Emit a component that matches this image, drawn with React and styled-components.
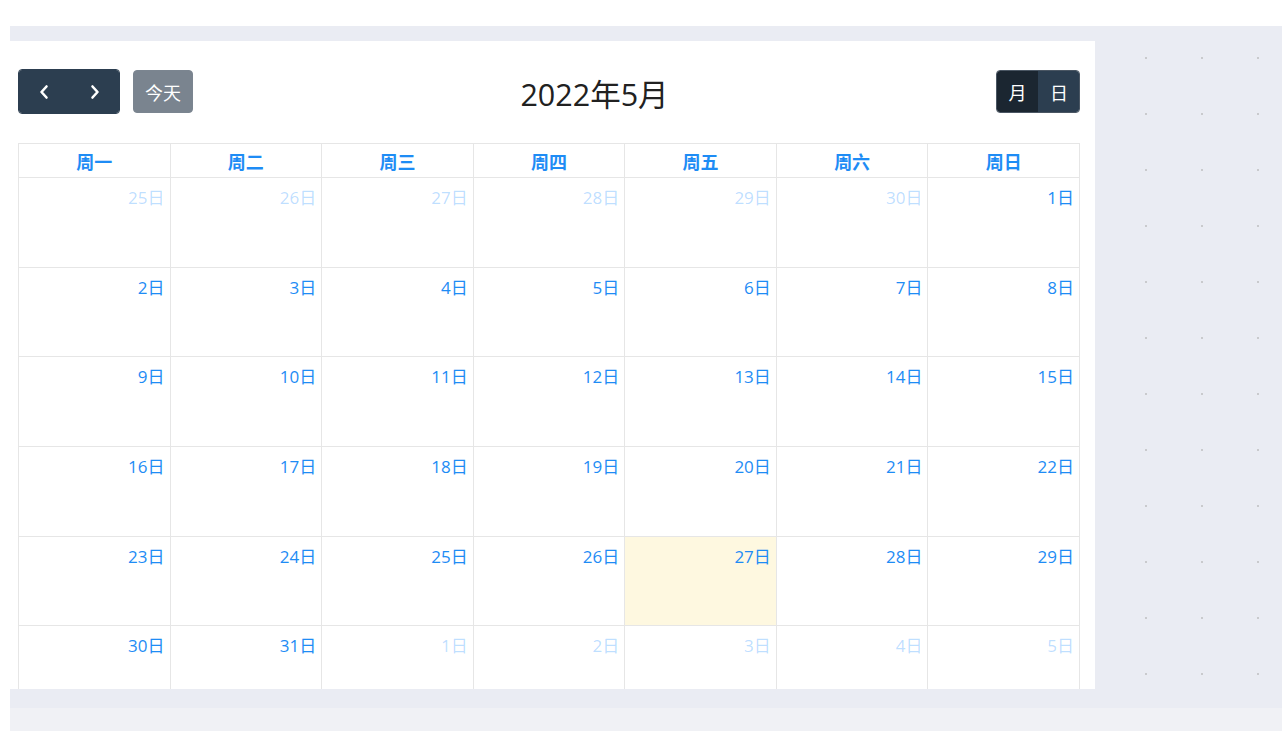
import React from "react";
import styled, { createGlobalStyle } from "styled-components";

const GlobalStyle = createGlobalStyle`
  html, body { margin: 0; padding: 0; background: #ffffff; }
  body {
    font-family: "Open Sans", "Noto Sans CJK SC", sans-serif;
    overflow: hidden;
  }
  * { box-sizing: border-box; }
`;

const Page = styled.div`
  padding: 26px 0 0 10px;
  width: 1282px;
  height: 731px;
`;

const Frame = styled.div`
  height: 682px;
  padding-top: 15px;
  background-color: #eaecf3;
  background-image: radial-gradient(circle, #c9cacd 1.45px, transparent 1.5px);
  background-size: 56px 56px;
  background-position: -12px 4px;
  display: flex;
  align-items: flex-start;
`;

const Footer = styled.div`
  height: 23px;
  background: #f0f1f5;
`;

const Panel = styled.div`
  width: 1085px;
  height: 648px;
  background: #ffffff;
  padding: 28px 15px 0 8px;
  overflow: hidden;
`;

const Toolbar = styled.div`
  display: flex;
  justify-content: space-between;
  align-items: center;
  height: 45px;
  margin-bottom: 29px;
`;

const Chunk = styled.div`
  display: flex;
  align-items: center;
`;

const Group = styled.div`
  display: flex;
  border-radius: 4px;
  overflow: hidden;
  border: 1px solid ${(p) => p.$border || "#2c3e50"};
`;

const NavButton = styled.button`
  width: ${(p) => p.$w}px;
  height: ${(p) => p.$h}px;
  border: none;
  padding: 0;
  margin: 0;
  background: ${(p) => (p.$active ? "#1b2631" : "#2c3e50")};
  color: #ffffff;
  display: flex;
  align-items: center;
  justify-content: center;
  font-family: "Noto Sans CJK SC", sans-serif;
  font-size: 18px;
  cursor: pointer;
  & + & {
    border-left: 1px solid ${(p) => (p.$divider ? "#23323f" : "transparent")};
  }
`;

const TodayButton = styled.button`
  margin-left: 13px;
  width: 60px;
  height: 43px;
  border: 1px solid #7b8590;
  border-radius: 4px;
  background: #7a848f;
  color: #ffffff;
  font-family: "Noto Sans CJK SC", sans-serif;
  font-size: 18px;
  padding: 0;
`;

const Title = styled.h2`
  margin: 0;
  font-size: 30.5px;
  font-weight: 400;
  color: #212121;
  line-height: 1.2;
  position: relative;
  top: 3px;
`;

const Grid = styled.div`
  display: grid;
  grid-template-columns: repeat(7, 1fr);
  grid-template-rows: 34px repeat(6, 89.67px);
  border-top: 1px solid #e6e6e6;
  border-left: 1px solid #e6e6e6;
`;

const HeadCell = styled.div`
  border-right: 1px solid #e6e6e6;
  border-bottom: 1px solid #e6e6e6;
  display: flex;
  align-items: center;
  justify-content: center;
  color: #1e8cf5;
  font-weight: 700;
  font-size: 18px;
  font-family: "Noto Sans CJK SC", sans-serif;
  padding-top: 1px;
`;

const DayCell = styled.div`
  border-right: 1px solid #e6e6e6;
  border-bottom: 1px solid #e6e6e6;
  background: ${(p) => (p.$today ? "#fef8e0" : "#ffffff")};
  display: flex;
  justify-content: flex-end;
  align-items: flex-start;
  padding: 6px 5px 0 0;
`;

const DayNumber = styled.span`
  font-size: 17px;
  line-height: 27px;
  color: ${(p) => (p.$other ? "rgba(30,144,255,0.3)" : "#1e8cf5")};
`;

const Chevron = ({ dir }) => (
  <svg width="10" height="16" viewBox="0 0 10 16" fill="none">
    <polyline
      points={dir === "left" ? "7.5,2.5 2.5,8 7.5,13.5" : "2.5,2.5 7.5,8 2.5,13.5"}
      stroke="#ffffff"
      strokeWidth="2.6"
      strokeLinecap="round"
      strokeLinejoin="round"
    />
  </svg>
);

const weekdays = ["周一", "周二", "周三", "周四", "周五", "周六", "周日"];

const buildDays = () => {
  const days = [];
  [25, 26, 27, 28, 29, 30].forEach((d) => days.push({ d, other: true }));
  for (let i = 1; i <= 31; i++) days.push({ d: i, other: false, today: i === 27 });
  for (let i = 1; i <= 5; i++) days.push({ d: i, other: true });
  return days;
};

export default function App() {
  const days = buildDays();
  return (
    <>
      <GlobalStyle />
      <Page>
        <Frame>
          <Panel>
            <Toolbar>
              <Chunk>
                <Group $border="#2c3e50">
                  <NavButton $w={50} $h={43} aria-label="prev">
                    <Chevron dir="left" />
                  </NavButton>
                  <NavButton $w={50} $h={43} $divider aria-label="next">
                    <Chevron dir="right" />
                  </NavButton>
                </Group>
                <TodayButton>今天</TodayButton>
              </Chunk>
              <Title>2022年5月</Title>
              <Chunk>
                <Group $border="#4a5663">
                  <NavButton $w={41} $h={41} $active>
                    月
                  </NavButton>
                  <NavButton $w={41} $h={41}>
                    日
                  </NavButton>
                </Group>
              </Chunk>
            </Toolbar>
            <Grid>
              {weekdays.map((w) => (
                <HeadCell key={w}>{w}</HeadCell>
              ))}
              {days.map((day, i) => (
                <DayCell key={i} $today={day.today}>
                  <DayNumber $other={day.other}>{day.d}日</DayNumber>
                </DayCell>
              ))}
            </Grid>
          </Panel>
        </Frame>
        <Footer />
      </Page>
    </>
  );
}
